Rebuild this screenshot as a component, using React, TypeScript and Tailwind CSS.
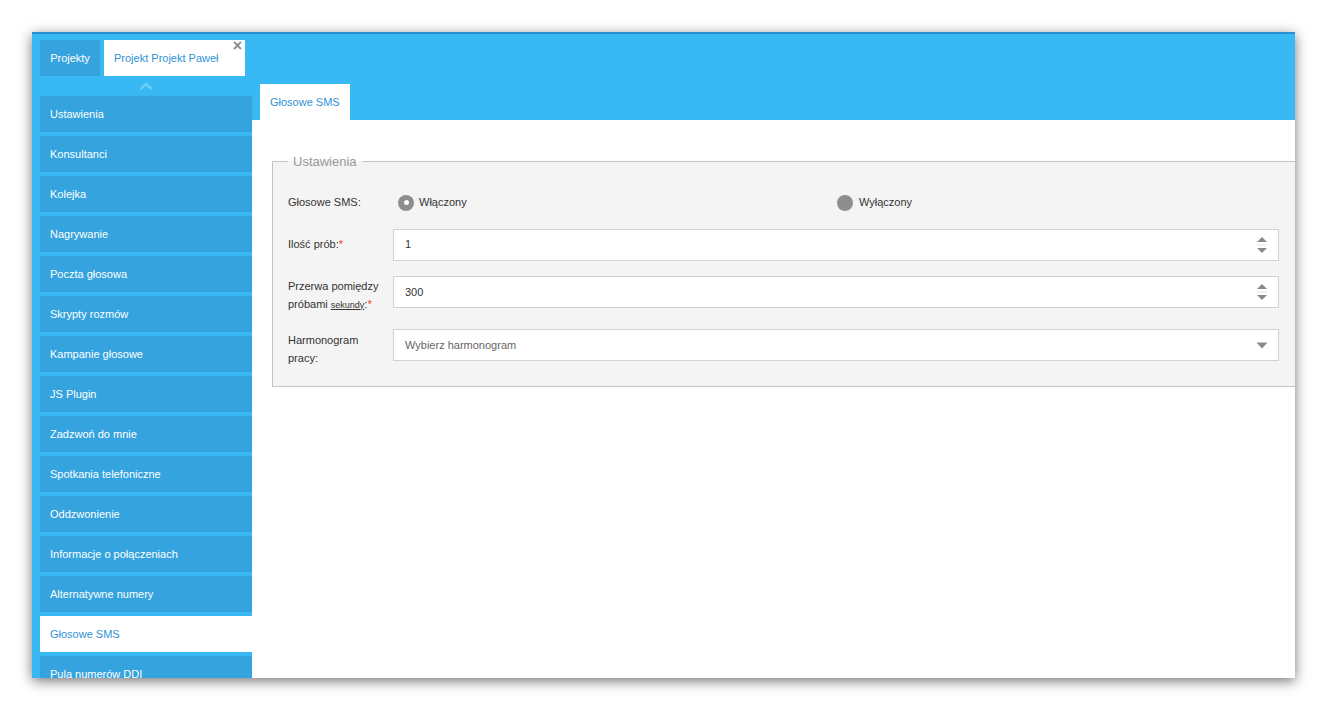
import React from "react";

const menu = [
  "Ustawienia",
  "Konsultanci",
  "Kolejka",
  "Nagrywanie",
  "Poczta głosowa",
  "Skrypty rozmów",
  "Kampanie głosowe",
  "JS Plugin",
  "Zadzwoń do mnie",
  "Spotkania telefoniczne",
  "Oddzwonienie",
  "Informacje o połączeniach",
  "Alternatywne numery",
  "Głosowe SMS",
  "Pula numerów DDI",
];

function Spinner() {
  return (
    <svg width="12" height="18" viewBox="0 0 12 18" className="absolute right-[10px] top-[6px]">
      <path d="M1 6 L6 1 L11 6 Z" fill="#8a8a8a" />
      <line x1="1" y1="9" x2="11" y2="9" stroke="#e4e4e4" strokeWidth="1" />
      <path d="M1 12 L11 12 L6 17 Z" fill="#8a8a8a" />
    </svg>
  );
}

function NumberInput({ value }: { value: string }) {
  return (
    <div className="relative h-[32px] flex-1 border border-[#d2d2d2] bg-white flex items-center pl-[11px] text-[11px] text-[#333]">
      {value}
      <Spinner />
    </div>
  );
}

export default function App() {
  return (
    <div className="h-screen w-full bg-white p-[32px] font-['Liberation_Sans',Arial,sans-serif]">
      <div className="relative flex h-[646px] w-[1263px] overflow-hidden border-t-2 border-[#2a8fcc] bg-[#38b9f4] shadow-[0_3px_12px_rgba(0,0,0,0.55)]">
        {/* left column */}
        <div className="w-[220px] shrink-0 pl-[8px] pt-[6px]">
          <div className="flex gap-[4px]">
            <div className="flex h-[36px] w-[60px] items-center justify-center bg-[#35a3de] text-[11px] text-white">
              Projekty
            </div>
            <div className="relative flex h-[36px] w-[141px] items-center pl-[10px] text-[11px] text-[#2f93d3] bg-white">
              Projekt Projekt Paweł
              <span className="absolute right-[3px] top-[-2px] text-[16px] font-bold leading-none text-[#8a8a8a]">×</span>
            </div>
          </div>
          <div className="flex h-[20px] w-[212px] items-center justify-center">
            <svg width="14" height="8" viewBox="0 0 14 8">
              <path d="M1.5 7 L7 2 L12.5 7" fill="none" stroke="#6ccdf7" strokeWidth="2.5" />
            </svg>
          </div>
          <div className="flex w-[212px] flex-col gap-[4px]">
            {menu.map((m) => (
              <div
                key={m}
                className={
                  m === "Głosowe SMS"
                    ? "flex h-[36px] shrink-0 items-center pl-[10px] text-[11px] text-[#2f93d3] bg-white"
                    : "flex h-[36px] shrink-0 items-center pl-[10px] text-[11px] text-white bg-[#35a3de]"
                }
              >
                {m}
              </div>
            ))}
          </div>
        </div>

        {/* main column */}
        <div className="flex flex-1 flex-col">
          <div className="flex h-[86px] shrink-0 items-end pl-[8px]">
            <div className="flex h-[36px] w-[90px] items-center bg-white pl-[10px] text-[11px] text-[#2f93d3]">
              Głosowe SMS
            </div>
          </div>
          <div className="flex-1 bg-white pl-[20px] pt-[32px]">
            <fieldset className="w-[1040px] border border-[#c4c4c4] bg-[#f4f4f4] pb-[19px] pl-[15px] pr-[15px]">
              <legend className="ml-0 px-[5px] text-[13px] text-[#999]">Ustawienia</legend>
              <div className="mt-[15px] flex h-[32px] items-center text-[11px] text-[#333]">
                <div className="w-[105px] shrink-0">Głosowe SMS:</div>
                <div className="flex w-[886px]">
                  <div className="flex w-1/2 items-center pl-[5px]">
                    <span className="flex h-[16px] w-[16px] items-center justify-center rounded-full bg-[#8e8e8e]">
                      <span className="h-[5px] w-[5px] rounded-full bg-white" />
                    </span>
                    <span className="ml-[5px]">Włączony</span>
                  </div>
                  <div className="flex w-1/2 items-center pl-[1px]">
                    <span className="h-[16px] w-[16px] rounded-full bg-[#8e8e8e]" />
                    <span className="ml-[6px]">Wyłączony</span>
                  </div>
                </div>
              </div>

              <div className="mt-[10px] flex items-center text-[11px] text-[#333]">
                <div className="w-[105px] shrink-0">
                  Ilość prób:<span className="text-[#e8413b]">*</span>
                </div>
                <div className="flex w-[886px]">
                  <NumberInput value="1" />
                </div>
              </div>

              <div className="mt-[15px] flex items-start text-[11px] leading-[18px] text-[#333]">
                <div className="w-[105px] shrink-0 pt-[1px]">
                  Przerwa pomiędzy
                  <br />
                  próbami <span className="text-[9px] underline">sekundy</span>:<span className="text-[#e8413b]">*</span>
                </div>
                <div className="flex w-[886px]">
                  <NumberInput value="300" />
                </div>
              </div>

              <div className="mt-[15px] flex items-start text-[11px] leading-[18px] text-[#333]">
                <div className="w-[105px] shrink-0 pt-[2px]">
                  Harmonogram
                  <br />
                  pracy:
                </div>
                <div className="relative flex h-[32px] w-[886px] items-center border border-[#d2d2d2] bg-white pl-[11px] text-[#666]">
                  Wybierz harmonogram
                  <svg width="12" height="7" viewBox="0 0 12 7" className="absolute right-[10px] top-[12px]">
                    <path d="M0.5 0.5 L11.5 0.5 L6 6.5 Z" fill="#8a8a8a" />
                  </svg>
                </div>
              </div>
            </fieldset>
          </div>
        </div>
      </div>
    </div>
  );
}
